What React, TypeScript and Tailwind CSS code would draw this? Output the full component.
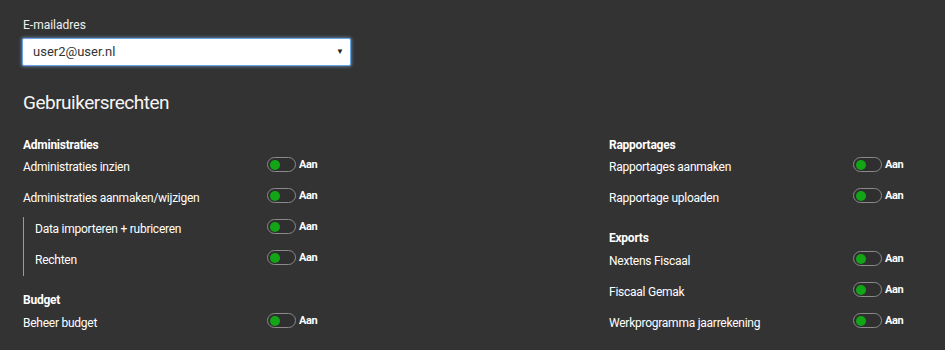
import React from "react";

interface Permission {
  label: string;
  indent?: boolean;
}

interface Section {
  title: string;
  items: Permission[];
}

const leftSections: Section[] = [
  {
    title: "Administraties",
    items: [
      { label: "Administraties inzien" },
      { label: "Administraties aanmaken/wijzigen" },
      { label: "Data importeren + rubriceren", indent: true },
      { label: "Rechten", indent: true },
    ],
  },
  {
    title: "Budget",
    items: [{ label: "Beheer budget" }],
  },
];

const rightSections: Section[] = [
  {
    title: "Rapportages",
    items: [{ label: "Rapportages aanmaken" }, { label: "Rapportage uploaden" }],
  },
  {
    title: "Exports",
    items: [
      { label: "Nextens Fiscaal" },
      { label: "Fiscaal Gemak" },
      { label: "Werkprogramma jaarrekening" },
    ],
  },
];

const Toggle: React.FC = () => (
  <div className="mb-[5px] flex items-center gap-[3px]">
    <div className="flex h-[15px] w-[29px] items-center rounded-full border-[1.5px] border-[#8a8a8a] bg-[#2f2f2f] pl-[2px]">
      <span className="h-[10px] w-[10px] rounded-full bg-[#12a616]" />
    </div>
    <span className="text-[11px] font-bold leading-none tracking-[-0.4px] text-white">Aan</span>
  </div>
);

const Row: React.FC<{ label: string; indent?: boolean }> = ({ label, indent }) => (
  <div className="flex h-[24px] items-center">
    <span
      className={`text-[12px] tracking-[-0.25px] text-white ${indent ? "w-[232px]" : "w-[244px]"}`}
    >
      {label}
    </span>
    <Toggle />
  </div>
);

// afterNested: the previous block ended with the indented group (its line runs a bit lower)
const SectionBlock: React.FC<{ section: Section; index: number; afterNested?: boolean }> = ({
  section,
  index,
  afterNested,
}) => {
  const plain = section.items.filter((i) => !i.indent);
  const nested = section.items.filter((i) => i.indent);
  const spacing = index === 0 ? "" : afterNested ? "mt-[16px]" : "mt-[20px]";
  return (
    <div className={spacing}>
      <h3
        className={`h-[16px] text-[12px] font-bold leading-[16px] tracking-[-0.25px] text-white ${
          index === 0 ? "mb-[2px]" : "mb-[3px]"
        }`}
      >
        {section.title}
      </h3>
      <div className="flex flex-col gap-[7px]">
        {plain.map((item) => (
          <Row key={item.label} label={item.label} />
        ))}
      </div>
      {nested.length > 0 && (
        <div className="mt-[11px] border-l-[1.5px] border-[#9a9a9a] pb-[4px] pl-[11px]">
          <div className="-mt-[4px] flex flex-col gap-[7px]">
            {nested.map((item) => (
              <Row key={item.label} label={item.label} indent />
            ))}
          </div>
        </div>
      )}
    </div>
  );
};

const Column: React.FC<{ sections: Section[] }> = ({ sections }) => (
  <>
    {sections.map((s, i) => (
      <SectionBlock
        key={s.title}
        section={s}
        index={i}
        afterNested={i > 0 && sections[i - 1].items.some((it) => it.indent)}
      />
    ))}
  </>
);

export default function App() {
  return (
    <div
      className="h-[350px] w-[945px] overflow-hidden bg-[#333333] pl-[23px] pt-[17px] text-white"
      style={{ fontFamily: "Roboto, 'Liberation Sans', sans-serif" }}
    >
      <label className="block h-[16px] text-[12px] leading-[16px] text-[#f0f0f0]">E-mailadres</label>
      <div className="-ml-[1px] mt-[5px] flex h-[28px] w-[329px] items-center justify-between rounded-[2px] border border-[#6aa6e0] bg-white pl-[10px] pr-[6px] shadow-[0_0_3px_1px_rgba(120,170,230,0.55)]">
        <span className="text-[13px] text-[#333333]">user2@user.nl</span>
        <span className="text-[8px] leading-none text-[#222222]">▼</span>
      </div>
      <h2 className="mt-[25px] h-[24px] text-[19px] leading-[24px] tracking-[-0.5px] text-[#f5f5f5]">
        Gebruikersrechten
      </h2>
      <div className="mt-[22px] flex">
        <div className="w-[586px]">
          <Column sections={leftSections} />
        </div>
        <div>
          <Column sections={rightSections} />
        </div>
      </div>
    </div>
  );
}
